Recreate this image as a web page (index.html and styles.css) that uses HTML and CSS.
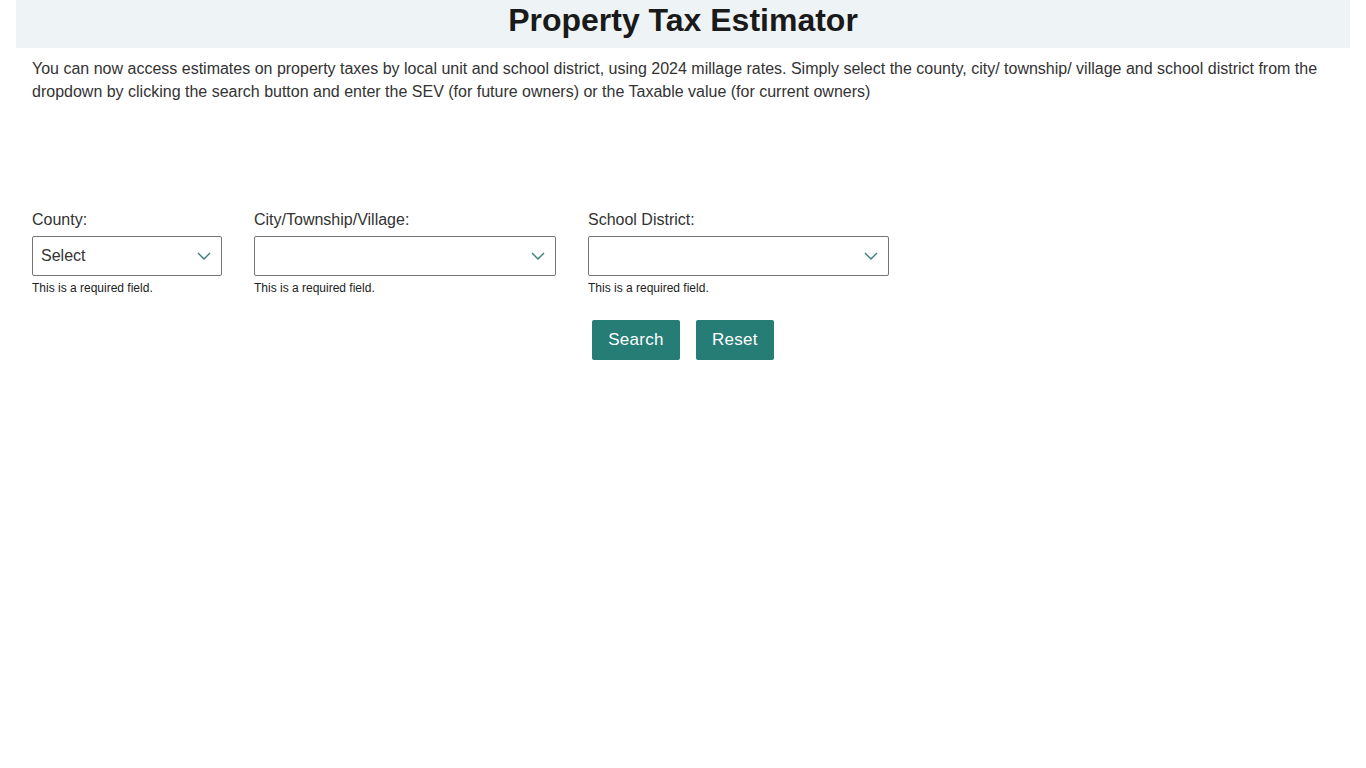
FILE: index.html
```html
<!DOCTYPE html>
<html>
	<head>
		<meta charset="UTF-8"/>
		<title>Property Tax Estimator</title>
		<link rel="stylesheet" href="styles.css">
	</head>
	<body>
		<div class="page">
			<header class="banner">
				<h1>Property Tax Estimator</h1>
			</header>
			<div class="content">
				<p class="intro">You can now access estimates on property taxes by local unit and school district, using 2024 millage rates. Simply select the county, city/ township/ village and school district from the dropdown by clicking the search button and enter the SEV (for future owners) or the Taxable value (for current owners)</p>

				<form class="search_form">
					<div class="fields">
						<div class="field county">
							<label>County:</label>
							<div class="select">
								<span class="value">Select</span>
								<svg class="chevron" width="14" height="8" viewBox="0 0 14 8"><path d="M1 1l6 6 6-6" fill="none" stroke="#3a7f78" stroke-width="1.4"/></svg>
							</div>
							<small>This is a required field.</small>
						</div>
						<div class="field city">
							<label>City/Township/Village:</label>
							<div class="select">
								<span class="value"></span>
								<svg class="chevron" width="14" height="8" viewBox="0 0 14 8"><path d="M1 1l6 6 6-6" fill="none" stroke="#3a7f78" stroke-width="1.4"/></svg>
							</div>
							<small>This is a required field.</small>
						</div>
						<div class="field school">
							<label>School District:</label>
							<div class="select">
								<span class="value"></span>
								<svg class="chevron" width="14" height="8" viewBox="0 0 14 8"><path d="M1 1l6 6 6-6" fill="none" stroke="#3a7f78" stroke-width="1.4"/></svg>
							</div>
							<small>This is a required field.</small>
						</div>
					</div>
					<div class="buttons">
						<button type="button" class="btn search">Search</button>
						<button type="button" class="btn reset">Reset</button>
					</div>
				</form>
			</div>
		</div>
	</body>
</html>
```

FILE: styles.css
```css
body{
	margin: 0;
	font-family: "Liberation Sans", Arial, sans-serif;
	color: #333;
	background: #fff;
}
.page{
	padding: 0 16px;
}
.banner{
	background-color: #eef3f6;
	height: 48px;
	text-align: center;
}
.banner h1{
	margin: 0;
	font-size: 32px;
	font-weight: bold;
	color: #1a1a1a;
	line-height: 40px;
}
.content{
	padding: 0 16px;
}
.intro{
	margin: 9px 0 0;
	font-size: 16px;
	line-height: 23px;
	color: #333;
}
.search_form{
	margin-top: 107px;
}
.fields{
	display: flex;
	gap: 32px;
}
.field{
	display: flex;
	flex-direction: column;
}
.field label{
	font-size: 16px;
	line-height: 20px;
	color: #333;
	margin-bottom: 6px;
}
.field small{
	font-size: 12px;
	line-height: 14px;
	margin-top: 5px;
	color: #222;
}
.county .select{ width: 190px; }
.city .select{ width: 302px; }
.school .select{ width: 301px; }
.select{
	box-sizing: border-box;
	height: 40px;
	border: 1px solid #767676;
	border-radius: 2px;
	display: flex;
	align-items: center;
	justify-content: space-between;
	padding: 0 10px 0 8px;
	font-size: 16px;
	color: #333;
}
.chevron{
	display: block;
}
.buttons{
	display: flex;
	justify-content: center;
	gap: 16px;
	margin-top: 25px;
}
.btn{
	height: 40px;
	border: none;
	border-radius: 2px;
	background-color: #267d75;
	color: #fff;
	font-family: "Liberation Sans", Arial, sans-serif;
	font-size: 17px;
	letter-spacing: 0.3px;
	padding: 0 16px;
}
```
